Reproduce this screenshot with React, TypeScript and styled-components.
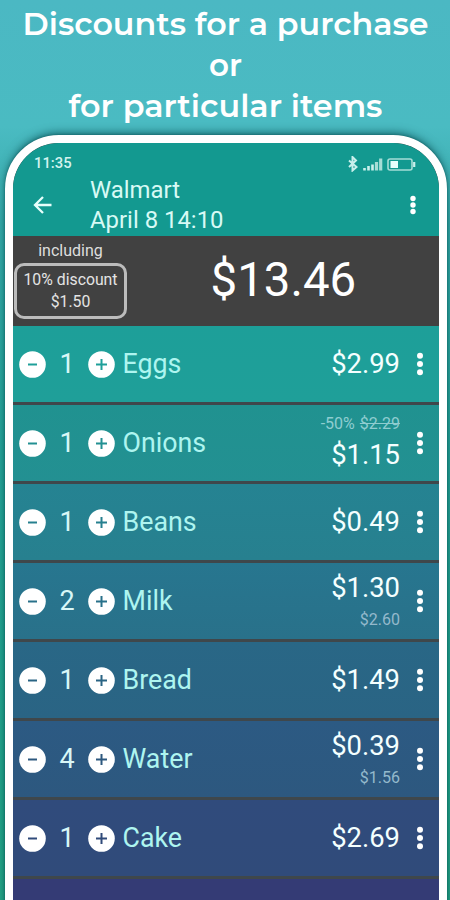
import React from "react";
import styled, { createGlobalStyle } from "styled-components";

const Global = createGlobalStyle`
  *{box-sizing:border-box}
  html,body{margin:0;height:900px;overflow:hidden}
  body{font-family:Roboto,"Noto Sans",sans-serif;color:#fff}
`;
const Page = styled.main`
  width: 450px;
  height: 900px;
  overflow: hidden;
  display: flex;
  flex-direction: column;
  background: linear-gradient(180deg, #4bb8c3 0%, #4abbc2 14%, #35aaa9 25%, #25a398 50%, #22a48a 85%, #25a586 100%);
`;
const Headline = styled.h1`
  margin: 0;
  height: 135px;
  padding-top: 3px;
  flex: none;
  display: flex;
  flex-direction: column;
  align-items: center;
`;
const HeadLine = styled.svg`
  display: block;
  height: 41px;
  width: 450px;
  text {
    font: 600 32px Montserrat, Inter, sans-serif;
    fill: #fff;
  }
`;
const Phone = styled.section`
  width: 442px;
  height: 900px;
  flex: none;
  margin-left: 5px;
  border: 8px solid #fff;
  border-radius: 54px;
  overflow: hidden;
  background: #414141;
  box-shadow: 0 0 3px rgba(0, 75, 75, 0.6), 0 -3px 10px -1px rgba(0, 70, 75, 0.7);
`;
const Header = styled.header`
  height: 93px;
  background: #139990;
  display: flex;
  flex-direction: column;
`;
const StatusBar = styled.div`
  height: 30px;
  padding: 11px 23px 0 21px;
  display: flex;
  justify-content: space-between;
  align-items: center;
`;
const Line = styled.span<{ $size: number; $color?: string; $weight?: number; $strike?: boolean }>`
  display: block;
  white-space: nowrap;
  font-size: ${(p) => p.$size}px;
  line-height: 1.2;
  font-weight: ${(p) => p.$weight ?? 400};
  color: ${(p) => p.$color ?? "#f4ffff"};
  text-decoration: ${(p) => (p.$strike ? "line-through" : "none")};
`;
const StatusIcons = styled.svg`
  width: 69px;
  height: 16px;
`;
const TitleBar = styled.div`
  height: 63px;
  display: flex;
  align-items: center;
  padding: 0 22px 0 20px;
`;
const BackIcon = styled.svg`
  width: 20px;
  height: 20px;
`;
const Title = styled.div`
  flex: 1;
  margin-left: 37px;
  line-height: 30px;
  font-size: 23.9px;
  color: #d8faf5;
`;
const DotsIcon = styled.svg`
  width: 8px;
  height: 26px;
  flex: none;
`;
const Summary = styled.div`
  height: 90px;
  display: flex;
  background: #414141;
`;
const Including = styled.div`
  width: 114px;
  padding: 5px 0 0 1px;
  display: flex;
  flex-direction: column;
  align-items: center;
`;
const Discount = styled.div`
  width: 113px;
  height: 56px;
  margin-top: 3px;
  border: 3px solid #bcbcbc;
  border-radius: 10px;
  display: flex;
  flex-direction: column;
  align-items: center;
  justify-content: center;
  gap: 3px;
`;
const Total = styled.div`
  padding-left: 83.5px;
  font-size: 47.4px;
  line-height: 88px;
`;
const Row = styled.div<{ $from: string; $to: string }>`
  height: 79px;
  border-bottom: 3px solid #3f474b;
  background: linear-gradient(180deg, ${(p) => p.$from}, ${(p) => p.$to});
  display: grid;
  grid-template-columns: 27px 42px 27px 1fr auto 8px;
  align-items: center;
  padding: 0 15.5px 0 6px;
`;
const RoundButton = styled.svg<{ $tone: string }>`
  width: 27px;
  height: 27px;
  color: ${(p) => p.$tone};
`;
const Quantity = styled.span`
  text-align: center;
  font-size: 27px;
  color: #d8f7f7;
`;
const Name = styled.span`
  padding-left: 7.5px;
  font-size: 26.8px;
  color: #aef5f0;
`;
const Prices = styled.div`
  display: flex;
  flex-direction: column;
  align-items: flex-end;
  gap: 5px;
  margin-right: 15.5px;
`;
const Before = styled.div`
  display: flex;
  gap: 5px;
`;

const Dots = ({ r = 3, gap = 8.2 }: { r?: number; gap?: number }) => (
  <DotsIcon viewBox="0 0 8 26" fill="#fff">
    {[-1, 0, 1].map((n) => (
      <circle key={n} cx="4" cy={13 + n * gap} r={r} />
    ))}
  </DotsIcon>
);
const Step = ({ plus, tone }: { plus?: boolean; tone: string }) => (
  <RoundButton viewBox="0 0 27 27" $tone={tone}>
    <circle cx="13.5" cy="13.5" r="13.3" fill="#fff" />
    <path d={plus ? "M8 13.5h11M13.5 8v11" : "M9 13.5h9"} stroke="currentColor" strokeWidth="2" />
  </RoundButton>
);

type Item = { name: string; qty: number; price: string; from: string; to: string; sum?: string; off?: string; was?: string };
const items: Item[] = [
  { name: "Eggs", qty: 1, price: "$2.99", from: "#1d9f99", to: "#1f9f99" },
  { name: "Onions", qty: 1, price: "$1.15", from: "#209290", to: "#239092", off: "-50%", was: "$2.29" },
  { name: "Beans", qty: 1, price: "$0.49", from: "#258392", to: "#27808f" },
  { name: "Milk", qty: 2, price: "$1.30", from: "#27768f", to: "#29718a", sum: "$2.60" },
  { name: "Bread", qty: 1, price: "$1.49", from: "#296786", to: "#2a6484" },
  { name: "Water", qty: 4, price: "$0.39", from: "#2c5a83", to: "#2d587f", sum: "$1.56" },
  { name: "Cake", qty: 1, price: "$2.69", from: "#304b7c", to: "#304b7a" },
];
const headlines: [string, number][] = [
  ["Discounts for a purchase", 406],
  ["or", 33],
  ["for particular items", 314],
];

export default function App() {
  return (
    <Page>
      <Global />
      <Headline>
        {headlines.map(([t, w]) => (
          <HeadLine key={t} viewBox="0 0 450 41">
            <text x={225.5 - w / 2} y="32" textLength={w} lengthAdjust="spacingAndGlyphs">{t}</text>
          </HeadLine>
        ))}
      </Headline>
      <Phone>
        <Header>
          <StatusBar>
            <Line $size={14.8} $weight={500} $color="#d3f3ef">11:35</Line>
            <StatusIcons viewBox="0 0 69 16" fill="none" stroke="#c9f0ec">
              <path d="M2 4.5l7.500 6.500L5.500 14.500V1L9 4.500 2 11" strokeWidth="2" />
              <path d="M17.500 14.500v-2.500M21.500 14.500v-4.500M25.500 14.500V8.500" strokeWidth="2.600" />
              <path d="M29.500 14.500V6M33.700 14.500V2.500" stroke="#a5ddd6" strokeWidth="3.200" />
              <rect x="41" y="3" width="24" height="11" rx="2" stroke="#a5ddd6" strokeWidth="1.600" />
              <path d="M43.500 5h7.500v7h-7.500z" fill="#e8fffc" stroke="none" />
              <path d="M67.200 6v5" strokeWidth="2.200" />
            </StatusIcons>
          </StatusBar>
          <TitleBar>
            <BackIcon viewBox="0 0 20 20" fill="none" stroke="#e6fffb" strokeWidth="2.300">
              <path d="M18.500 10H3M10 2L2 10l8 8" />
            </BackIcon>
            <Title>Walmart<br />April 8 14:10</Title>
            <Dots r={2.7} gap={6.5} />
          </TitleBar>
        </Header>
        <Summary>
          <Including>
            <Line $size={16} $color="#dedede">including</Line>
            <Discount>
              <Line $size={15.8} $color="#e4e4e4">10% discount</Line>
              <Line $size={15.8} $color="#e4e4e4">$1.50</Line>
            </Discount>
          </Including>
          <Total>$13.46</Total>
        </Summary>
        {items.map((i) => (
          <Row key={i.name} $from={i.from} $to={i.to}>
            <Step tone={i.to} />
            <Quantity>{i.qty}</Quantity>
            <Step plus tone={i.to} />
            <Name>{i.name}</Name>
            <Prices>
              {i.was && (
                <Before>
                  <Line $size={16} $color="#8fcdd0">{i.off}</Line>
                  <Line $size={16} $color="#8fcdd0" $strike>{i.was}</Line>
                </Before>
              )}
              <Line $size={27.4}>{i.price}</Line>
              {i.sum && <Line $size={16} $color="#94b9cc">{i.sum}</Line>}
            </Prices>
            <Dots />
          </Row>
        ))}
        <Row $from="#343b75" $to="#343b75" />
      </Phone>
    </Page>
  );
}
